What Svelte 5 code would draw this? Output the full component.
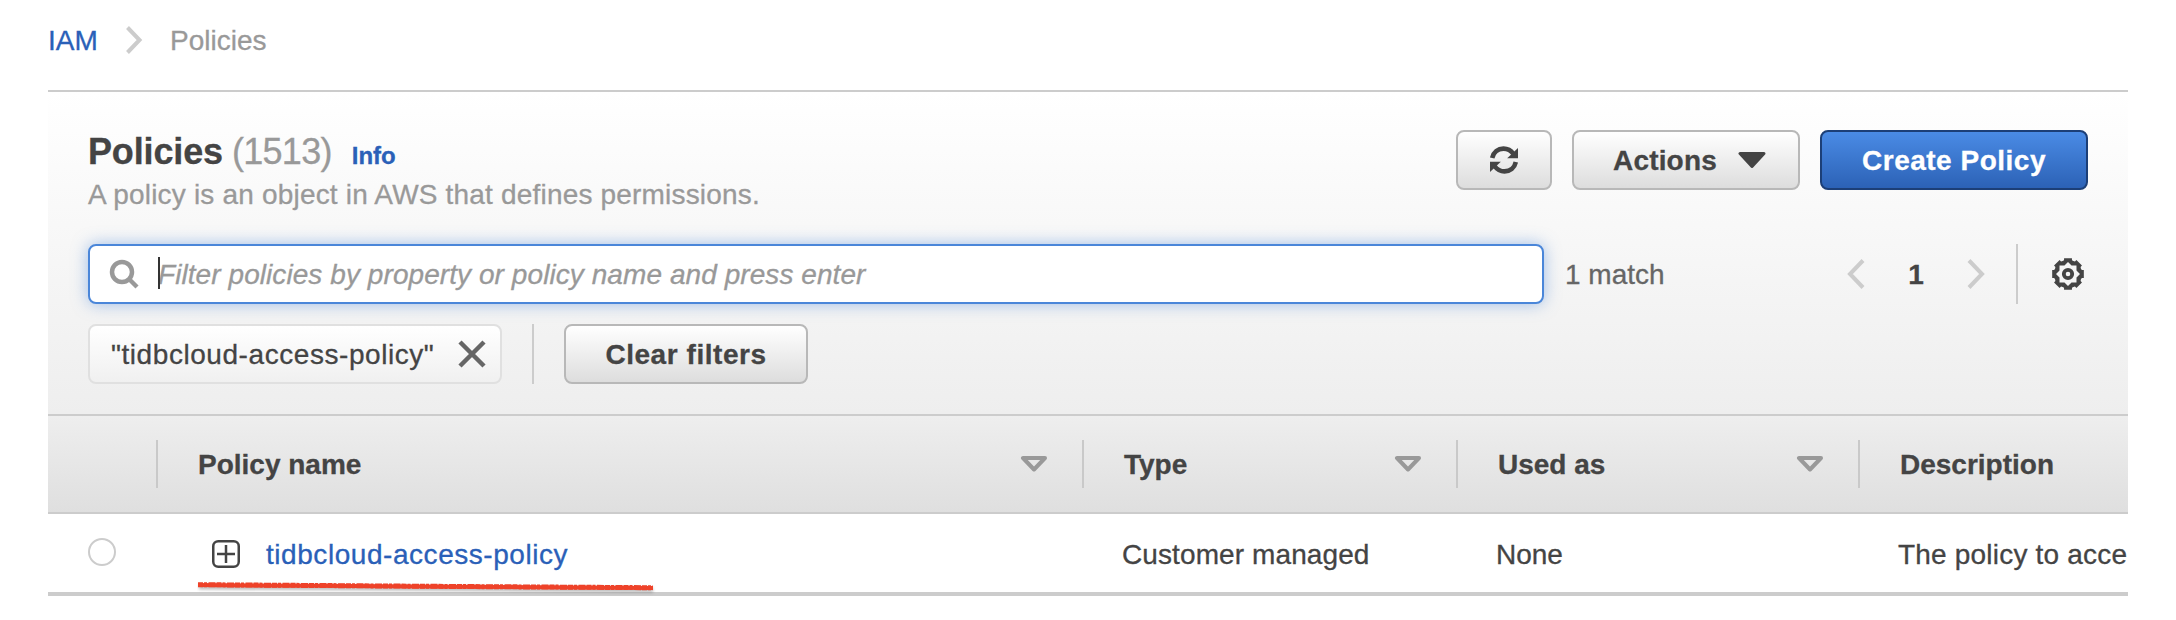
<script>
  const columns = [
    { label: 'Policy name', cls: 'c-name', sort: true },
    { label: 'Type', cls: 'c-type', sort: true },
    { label: 'Used as', cls: 'c-used', sort: true },
    { label: 'Description', cls: 'c-desc', sort: false }
  ];

  const polar = (r, deg) => {
    const a = (deg * Math.PI) / 180;
    return `${(r * Math.cos(a)).toFixed(2)} ${(r * Math.sin(a)).toFixed(2)}`;
  };

  // Eight-toothed ring: outer toothed edge plus a star-shaped hole.
  const outer = [];
  const hole = [];
  for (let k = 0; k < 8; k++) {
    const a = k * 45;
    outer.push(polar(14.4, a - 16), polar(16.3, a - 14), polar(16.3, a + 14), polar(14.4, a + 16), polar(14, a + 22.5));
    hole.push(polar(12, a), polar(9.2, a + 22.5));
  }
  const gear = `M${outer.join('L')}ZM${hole.join('L')}Z`;
</script>

<div class="page">
  <nav class="crumbs">
    <a class="t-iam" href="#iam">IAM</a>
    <svg class="crumb-sep" width="18" height="30" viewBox="0 0 18 30"><path d="M2.500 2.500L14.500 15L2.500 27.500" /></svg>
    <span class="t-crumb">Policies</span>
  </nav>

  <main class="panel">
    <section class="top">
      <div class="heading-row">
        <div class="heading">
          <div class="title">
            <h1>Policies</h1><span class="count">(1513)</span><a class="info" href="#info">Info</a>
          </div>
          <p class="sub"><span class="t-sub">A policy is an object in AWS that defines permissions.</span></p>
        </div>
        <div class="actions">
          <button class="btn refresh" aria-label="Refresh">
            <svg width="28" height="28" viewBox="0 0 28 28">
              <path class="arc" d="M2.200 12C3.500 6 8 2.600 13.500 2.600C17.800 2.600 21 4.500 23.500 8" />
              <path class="head" d="M28 2V12.300H17.200Z" />
              <path class="arc" d="M25.800 16C24.500 22 20 25.400 14.500 25.400C10.200 25.400 7 23.500 4.500 20" />
              <path class="head" d="M0 26V15.700H10.800Z" />
            </svg>
          </button>
          <button class="btn menu"><span class="t-actions">Actions</span>
            <svg width="28" height="16" viewBox="0 0 28 16"><path d="M2 1.500H26L14 14.500Z" /></svg>
          </button>
          <button class="btn primary"><span class="t-create">Create Policy</span></button>
        </div>
      </div>

      <div class="search-row">
        <div class="search">
          <svg width="32" height="32" viewBox="0 0 32 32"><circle cx="14" cy="14" r="10" /><path d="M21 21L29 29" /></svg>
          <span class="placeholder"><i class="cursor"></i><span class="t-ph">Filter policies by property or policy name and press enter</span></span>
        </div>
        <span class="match">1 match</span>
        <div class="pager">
          <svg width="18" height="30" viewBox="0 0 18 30"><path d="M16 1.500L3 15L16 28.500" /></svg>
          <b>1</b>
          <svg width="18" height="30" viewBox="0 0 18 30"><path d="M2 1.500L15 15L2 28.500" /></svg>
        </div>
        <div class="settings">
          <svg width="32" height="32" viewBox="-16 -16 32 32">
            <path d={gear} fill="#444" fill-rule="evenodd" />
            <circle r="4.200" />
          </svg>
        </div>
      </div>

      <div class="filter-row">
        <div class="chip">
          <span class="t-chip">"tidbcloud-access-policy"</span>
          <svg width="28" height="28" viewBox="0 0 28 28"><path d="M2 2L26 26M26 2L2 26" /></svg>
        </div>
        <div class="clear"><button class="btn"><span class="t-clear">Clear filters</span></button></div>
      </div>
    </section>

    <div class="grid thead">
      <div class="c-check"></div>
      {#each columns as col}
        <div class="th {col.cls}">
          <span class="label">{col.label}</span>
          {#if col.sort}
            <svg width="28" height="16" viewBox="0 0 28 16"><path d="M3 2H25L14 13.500Z" /></svg>
          {/if}
        </div>
      {/each}
    </div>

    <div class="grid row">
      <div class="c-check"><span class="radio"></span></div>
      <div class="td name">
        <svg width="28" height="28" viewBox="0 0 28 28"><rect x="1.250" y="1.250" width="25.500" height="25.500" rx="5" /><path d="M5 14H23M14 5V23" /></svg>
        <a class="t-link" href="#policy">tidbcloud-access-policy</a>
        <svg class="mark" width="460" height="16" viewBox="0 0 460 16">
          <path class="shade" d="M2 7L456 10" />
          <path class="ink" d="M1 5L120 5.800L260 6.800L456 8" />
          <path class="rough" d="M1 4.700L120 5.500L260 6.500L456 7.700" />
        </svg>
      </div>
      <div class="td"><span class="t-managed">Customer managed</span></div>
      <div class="td"><span class="t-none">None</span></div>
      <div class="td last"><span class="t-desc">The policy to acce</span></div>
    </div>
  </main>
</div>

<style>
  :global(body) { background: #fff; }
  .page {
    box-sizing: border-box;
    width: 2176px;
    height: 620px;
    padding: 0 48px;
    overflow: hidden;
    background: #fff;
    color: #444;
    font: 28px "Liberation Sans", Arial, sans-serif;
    -webkit-text-stroke: .3px;
  }
  span, a, h1 { white-space: nowrap; }
  a { color: #2a60b8; text-decoration: none; }
  svg { display: block; flex: none; fill: none; }

  .crumbs { display: flex; align-items: center; height: 80px; padding-bottom: 10px; color: #999; }
  .t-iam { width: 77px; padding-top: 2px; }
  .crumb-sep { stroke: #ccc; stroke-width: 4; }
  .t-crumb { margin-left: 27px; padding-top: 2px; }

  .panel { border-top: 2px solid #ccc; border-bottom: 4px solid #ccc; }
  .top {
    box-sizing: border-box;
    height: 322px;
    padding: 38px 40px 0;
    background: linear-gradient(#fff, #eee);
  }
  .heading-row { display: flex; justify-content: space-between; height: 114px; }
  .title { display: flex; align-items: baseline; height: 44px; line-height: 44px; }
  h1 { margin: 0; font-size: 36px; line-height: 44px; letter-spacing: -.15px; }
  .count { margin-left: 9px; font-size: 36px; letter-spacing: -.7px; color: #999; }
  .info { margin-left: 20px; font-size: 24px; font-weight: bold; }
  .sub { margin: 0; line-height: 42px; color: #999; }
  .t-sub { letter-spacing: .185px; }

  .actions { display: flex; gap: 20px; height: 60px; }
  .btn {
    box-sizing: border-box;
    display: flex;
    align-items: center;
    justify-content: center;
    height: 60px;
    margin: 0;
    padding: 0;
    border: 2px solid #b8b8b8;
    border-radius: 8px;
    background: linear-gradient(#fff, #ddd);
    color: #444;
    font: bold 28px "Liberation Sans", Arial, sans-serif;
  }
  .btn span { padding-top: 2px; }
  .refresh { width: 96px; }
  .refresh .arc { stroke: #444; stroke-width: 4.600; }
  .refresh .head { fill: #444; }
  .menu { width: 228px; justify-content: space-between; padding: 0 32px 0 39px; }
  .menu path { fill: #444; stroke: #444; stroke-width: 3; stroke-linejoin: round; }
  .t-actions { letter-spacing: .18px; }
  .primary { width: 268px; border-color: #1c3f77; background: linear-gradient(#4a8be5, #2c62b6); color: #fff; }
  .t-create { letter-spacing: .5px; }

  .search-row { display: flex; align-items: center; height: 60px; }
  .search {
    box-sizing: border-box;
    display: flex;
    align-items: center;
    width: 1456px;
    height: 60px;
    padding-left: 18px;
    border: 2px solid #4a86d9;
    border-radius: 8px;
    background: #fff;
    box-shadow: 0 0 16px rgba(74, 134, 217, .5);
  }
  .search svg { stroke: #999; stroke-width: 4.500; }
  .placeholder { position: relative; margin-left: 18px; padding-top: 2px; color: #999; font-style: italic; }
  .t-ph { letter-spacing: .07px; }
  .cursor { position: absolute; left: 0; top: 0; width: 2px; height: 32px; background: #333; }
  .match { width: 303px; padding: 2px 0 0 21px; box-sizing: border-box; color: #666; }
  .pager { display: flex; align-items: center; justify-content: space-between; width: 138px; }
  .pager b { padding-top: 2px; }
  .pager svg { stroke: #ccc; stroke-width: 4; }
  .settings { display: flex; align-items: center; height: 60px; margin-left: 31px; padding-left: 34px; border-left: 2px solid #ccc; }
  .settings circle { stroke: #444; stroke-width: 3.800; }

  .filter-row { display: flex; height: 60px; margin-top: 20px; }
  .chip {
    box-sizing: border-box;
    display: flex;
    align-items: center;
    justify-content: space-between;
    width: 414px;
    padding: 0 14px 0 21px;
    border: 2px solid #e0e0e0;
    border-radius: 8px;
    background: linear-gradient(#fff, #f0f0f0);
  }
  .t-chip { padding-top: 2px; letter-spacing: .56px; }
  .chip svg { stroke: #666; stroke-width: 4.500; }
  .clear { margin-left: 30px; padding-left: 30px; border-left: 2px solid #ccc; }
  .clear .btn { width: 244px; }
  .t-clear { letter-spacing: .55px; }

  .grid { display: grid; grid-template-columns: 108px 926px 374px 402px 270px; align-items: center; }
  .thead {
    height: 96px;
    border-top: 2px solid #ccc;
    border-bottom: 2px solid #ccc;
    background: linear-gradient(#eee, #dfdfdf);
    font-weight: bold;
  }
  .th {
    box-sizing: border-box;
    display: flex;
    align-items: center;
    justify-content: space-between;
    height: 48px;
    padding: 0 34px 0 40px;
    border-left: 2px solid #c9c9c9;
  }
  .label { padding-top: 2px; }
  .th svg { stroke: #999; stroke-width: 4; stroke-linejoin: round; }
  .row { height: 78px; }
  .row .c-check { padding: 0 0 2px 40px; }
  .radio { display: block; box-sizing: border-box; width: 28px; height: 28px; border: 2px solid #ccc; border-radius: 50%; }
  .td { padding: 4px 0 0 40px; }
  .t-managed { letter-spacing: .1px; }
  .t-desc { letter-spacing: .2px; }
  .last { overflow: hidden; }
  .name { position: relative; display: flex; align-items: center; gap: 26px; padding: 2px 0 0 56px; }
  .t-link { padding-top: 2px; letter-spacing: .55px; }
  .name svg { stroke: #444; stroke-width: 2.500; }
  .name .mark { position: absolute; left: 41px; top: 45px; }
  .name .mark .shade { stroke: rgba(0, 0, 0, .25); stroke-width: 5; filter: blur(1.500px); }
  .name .mark .ink { stroke: #ee4229; stroke-width: 4; }
  .name .mark .rough { stroke: #ee4229; stroke-width: 5; stroke-dasharray: 5 1 3 1.500 7 1; }
</style>
